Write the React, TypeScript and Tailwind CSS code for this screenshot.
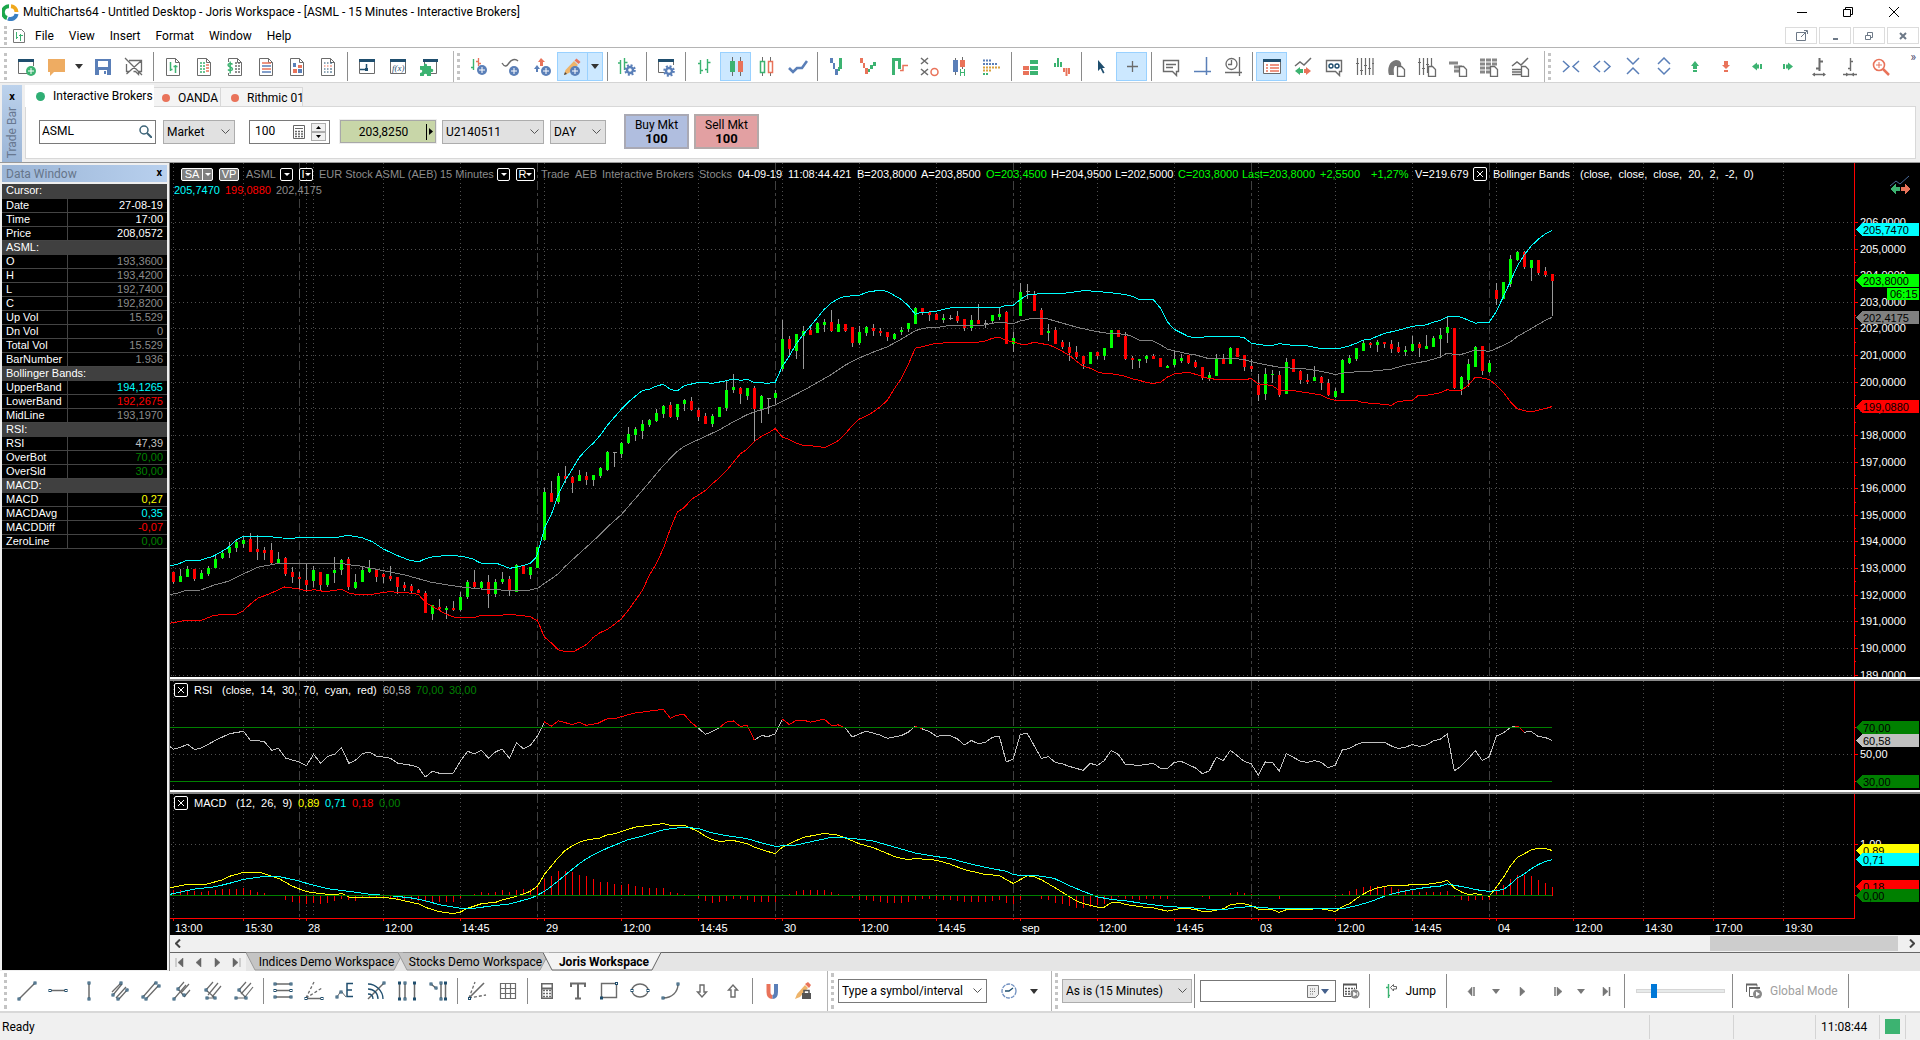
import type { ReactNode } from "react";
import { clsx } from "clsx";

type Frame = { x: number; y: number; sx: number; sy: number };

// Series are stored in blocks; every block has its own origin and resolution.
const EARLY: Frame = { x: 160, y: 440, sx: 2.45, sy: 3 };
const STUDY: Frame = { x: 160, y: 670, sx: 1.96, sy: 3 };
const MID: Frame = { x: 535, y: 220, sx: 3, sy: 2.24 };
const LATE: Frame = { x: 1045, y: 220, sx: 3, sy: 2.24 };

const FIRST_BAR = 173;
const BAR_STEP = 7;
const LEFT = 170;

function place(block: string, f: Frame) {
  return block
    .trim()
    .split(/\s+/)
    .map((p) => {
      const [x, y] = p.split(",").map(Number);
      return `${(f.x + x / f.sx).toFixed(1)},${(f.y + y / f.sy).toFixed(1)}`;
    })
    .join(" ");
}

const UPPER = [
  place("24,377 40,374 64,362 100,360 130,349 165,325 187,300 204,289 225,289 245,291 260,289 300,294 325,295 345,292 435,292 460,286 495,293 520,305 547,327 580,346 610,360 633,366 650,356 670,350 705,346 740,349 765,356 785,369 825,370 857,385 880,380 907,370 919,355", EARLY),
  place("7,750 28,692 49,660 70,615 91,583 112,558 133,532 154,514 175,500 196,482 217,460 259,424 280,408 301,395 322,382 343,379 364,372 385,368 406,379 427,383 448,371 490,364 511,364 532,366 574,360 595,356 616,359 637,357 655,363 700,366 721,363 742,328 763,305 784,277 805,256 826,238 868,200 889,186 910,176 931,171 973,169 994,162 1036,157 1057,160 1078,169 1099,178 1120,192 1141,211 1162,206 1183,206 1204,204 1246,197 1390,197 1414,191 1435,191 1456,178 1477,168 1498,166 1535,165", MID),
  place("10,165 52,165 73,162 94,161 115,158 157,160 199,163 220,165 241,167 262,171 283,178 325,178 346,197 367,228 388,245 409,253 430,261 451,264 493,261 577,261 598,264 619,276 661,281 682,281 703,277 745,281 787,282 820,287 882,288 913,282 934,276 955,269 976,267 1018,254 1060,247 1102,238 1144,235 1165,229 1186,225 1207,217 1228,215 1249,218 1291,231 1333,229 1354,205 1375,172 1396,138 1417,103 1438,78 1459,58 1480,43 1501,31 1521,23", LATE),
].join(" ");

const MIDDLE = [
  place("24,463 40,461 64,451 100,450 135,434 170,423 204,402 239,382 273,374 290,370 345,370 358,372 376,370 395,372 450,371 462,374 495,379 530,388 600,405 665,427 700,434 740,441 785,447 830,449 850,453 905,451 921,445", EARLY),
  place("7,826 28,814 49,804 70,792 91,776 133,747 175,719 217,688 259,660 322,606 385,550 427,518 448,507 469,499 511,485 553,470 595,452 637,436 658,430 700,420 721,414 763,398 805,382 847,364 889,346 931,325 973,309 1015,296 1057,284 1099,267 1141,248 1162,243 1183,241 1204,241 1246,236 1340,236 1390,229 1435,232 1456,226 1477,223 1491,220 1535,220", MID),
  place("10,222 52,231 94,240 136,247 178,253 241,256 262,261 283,269 325,271 346,279 367,289 388,293 430,300 451,302 493,311 577,311 598,313 640,321 703,330 787,334 829,339 871,346 913,341 976,339 1039,334 1081,325 1144,316 1186,307 1207,298 1228,301 1249,301 1291,291 1333,294 1354,288 1396,273 1417,261 1459,243 1501,225 1521,218", LATE),
].join(" ");

const LOWER = [
  place("24,550 64,541 102,541 130,527 155,523 187,523 204,512 221,493 239,475 273,459 305,441 340,447 358,452 378,449 405,455 445,448 462,459 480,463 520,463 560,455 605,458 633,463 650,487 680,508 700,522 720,531 770,533 787,526 835,526 857,523 880,526 907,530 923,541", EARLY),
  place("7,896 28,934 49,947 70,963 91,967 115,967 133,960 154,951 175,935 196,924 217,917 238,906 259,893 280,874 301,852 322,830 343,796 364,770 385,736 406,692 427,654 448,644 469,626 490,616 511,606 532,591 553,578 574,562 616,524 637,513 658,496 679,485 700,477 721,467 742,486 763,492 784,500 805,505 847,507 868,510 889,503 910,494 931,479 952,460 973,446 994,439 1015,430 1036,418 1057,404 1078,378 1099,355 1120,324 1141,287 1162,284 1204,276 1246,275 1325,274 1351,271 1372,265 1393,262 1414,270 1435,273 1456,278 1477,278 1498,274 1535,279", MID),
  place("10,279 31,286 52,294 73,303 94,316 115,328 136,332 157,340 178,344 199,344 241,350 262,356 283,359 304,364 325,366 346,364 367,352 388,345 430,341 472,350 493,356 598,358 619,355 640,367 682,371 703,382 745,382 787,387 829,392 850,400 871,404 934,404 955,409 1018,413 1039,415 1060,406 1102,404 1118,394 1144,393 1186,387 1207,380 1228,383 1249,382 1270,370 1291,352 1312,354 1333,357 1354,370 1375,386 1396,407 1417,423 1438,427 1459,430 1480,426 1501,422 1521,418", LATE),
].join(" ");

const RSI_GREY = [
  place("20,230 26,238 40,232 54,223 68,239 82,233 109,211 136,191 164,184 177,211 191,211 205,216 219,241 232,235 246,264 273,276 287,287 301,253 315,280 328,260 342,253 356,233 370,280 383,271 397,250 411,247 424,258 452,265 466,280 493,286 507,293 520,321 534,304 548,310 575,309 589,273 603,244 616,252 630,241 644,265 658,245 671,238 685,265 699,218 712,236 726,226 740,197 754,155", STUDY),
  place("490,1138 511,1152 532,1146 553,1137", MID),
  place("658,1165 679,1155 700,1157 721,1151 742,1118", MID),
  place("931,1138 952,1158 973,1151 994,1145 1036,1154 1057,1161 1099,1155 1120,1147 1141,1134", MID),
  place("1162,1140 1183,1146 1204,1156 1246,1155 1267,1162 1288,1176 1309,1166 1330,1173 1351,1170 1372,1159 1393,1156 1414,1214 1435,1207 1456,1152 1477,1150 1519,1206 1535,1203", MID) +
    " " +
    place("10,1202 31,1215 52,1218 73,1224 115,1233 136,1217 157,1222 178,1211 199,1188 220,1197 241,1219 283,1222 325,1217 346,1228 367,1229 388,1215 409,1213 451,1227 472,1240 493,1234 514,1203 535,1211 556,1188 577,1200 598,1213 619,1218 640,1244 661,1214 682,1215 703,1234 724,1195 766,1212 787,1215 808,1211 829,1215 850,1227 871,1221 892,1187 913,1184 934,1175 955,1170 1018,1170 1039,1178 1060,1184 1081,1181 1102,1175 1123,1179 1144,1176 1165,1167 1186,1163 1207,1151 1228,1234 1249,1223 1270,1207 1291,1188 1312,1211 1333,1202 1354,1156 1375,1149 1396,1137 1409,1134", LATE),
  place("1438,1147 1459,1146 1480,1157 1501,1159 1521,1166", LATE),
];

const RSI_RED = [
  place("28,1124 49,1134 70,1122 112,1130 133,1125 154,1132 190,1127 217,1117 238,1117 295,1105 385,1096 406,1116 427,1109 448,1108 469,1126 490,1138", MID),
  place("553,1137 574,1125 595,1122 616,1134 637,1132 658,1165", MID),
  place("742,1118 763,1130 784,1121 805,1120 826,1125 868,1118 889,1132 910,1131 931,1138", MID),
  place("1141,1134 1162,1140", MID),
  place("1409,1134 1420,1135 1438,1147", LATE),
];

const MACD_LINE = [
  place("20,653 54,643 82,645 95,641 123,629 136,619 164,607 195,607 219,619 232,625 260,649 287,665 310,670 342,675 356,670 370,681 411,681 440,682 466,688 507,702 520,712 548,725 575,731 589,726 603,715 630,701 658,697 671,690 699,679 726,664 738,650", STUDY),
  place("7,1493 28,1466 49,1447 70,1428 91,1412 112,1402 133,1394 154,1389 196,1384 217,1377 238,1375 301,1360 322,1358 385,1352 406,1356 448,1356 490,1370 511,1380 532,1388 553,1392 595,1390 637,1397 658,1405 679,1410 700,1415 721,1419 742,1405 763,1397 805,1383 847,1377 868,1374 910,1378 931,1384 973,1397 1015,1406 1057,1419 1078,1426 1118,1433 1141,1430 1204,1434 1246,1443 1288,1455 1351,1466 1393,1468 1414,1478 1435,1486 1477,1469 1498,1471 1519,1478", MID),
  place("10,1487 31,1496 52,1506 94,1525 115,1531 157,1539 178,1539 199,1529 220,1528 241,1533 304,1540 325,1541 367,1548 409,1542 451,1544 472,1549 493,1549 535,1543 556,1534 577,1532 598,1532 619,1536 640,1544 682,1545 703,1551 724,1545 829,1543 871,1549 892,1538 913,1532 934,1520 955,1510 976,1502 997,1496 1039,1490 1081,1491 1102,1488 1144,1488 1186,1484 1207,1479 1228,1496 1249,1505 1270,1511 1291,1509 1312,1512 1333,1515 1354,1494 1375,1473 1396,1447 1417,1428 1459,1411 1480,1407 1501,1408 1521,1412", LATE),
].join(" ");

const MACD_AVG = [
  place("20,673 68,657 109,650 136,640 164,628 205,619 232,619 246,624 273,633 287,640 328,656 370,664 411,673 452,677 493,684 520,692 548,704 589,715 616,715 644,709 685,702 726,685 738,677", STUDY),
  place("28,1504 49,1493 70,1480 91,1467 133,1442 154,1431 175,1422 217,1407 280,1388 322,1380 385,1366 448,1360 490,1363 532,1373 574,1379 637,1386 679,1395 721,1403 784,1400 826,1393 889,1383 931,1384 973,1387 1015,1391 1057,1400 1099,1409 1141,1418 1204,1426 1246,1430 1288,1439 1351,1450 1414,1459 1435,1466 1456,1468 1500,1468 1535,1472", MID),
  place("10,1472 31,1476 73,1491 115,1504 157,1516 199,1522 241,1525 304,1532 367,1538 430,1540 493,1544 545,1544 577,1540 619,1538 661,1541 724,1543 892,1543 934,1536 976,1527 1018,1515 1060,1506 1102,1500 1144,1495 1186,1492 1207,1487 1228,1490 1270,1496 1291,1500 1333,1504 1375,1500 1396,1488 1417,1474 1438,1465 1459,1453 1480,1444 1501,1437 1521,1433", LATE),
].join(" ");

const MACD_DIFF = [
  6, 6, 6, 5, 4, 5, 6, 7, 7, 7, 8, 6, 4, 3, 0, 0, -4, -6, -7, -8, -7, -8, -7, -5, -3, -4, -5, -2, -1, -1, -1, -2, -3, -4, -4, -5, -6, -7, -6,
  -6, -6, -2, 0, 2, 4, 3, 4, 6, 4, 6, 7, 7, 11, 17, 20, 25, 25, 24, 21, 20, 17, 14, 14, 12, 11, 12, 10, 9, 8, 8, 8, 4, 3, 2, 0, -2, -5, -7,
  -6, -5, -3, -3, -4, -6, -6, -6, -6, 0, 2, 5, 6, 6, 6, 6, 4, 2, 0, -2, -4, -4, -5, -6, -7, -7, -7, -6, -4, -3, -3, -4, -4, -4, -5, -6, -6,
  -6, -6, -5, -4, -7, -8, -4, 0, 0, -3, -4, -7, -8, -10, -12, -12, -11, -9, -8, -4, -1, -3, -3, -4, -3, -3, -3, -3, 0, 0, 0, 0, -1, -3, 0,
  1, 3, 4, 3, 2, 0, 0, 0, -3, 0, 1, 0, 0, 0, 0, 0, -1, 2, 5, 7, 9, 10, 10, 10, 9, 7, 6, 5, 4, 4, 4, 4, 5, -1, -4, -5, -4, -4, -4, 7, 11, 17,
  21, 21, 20, 16, 13, 9,
];

// direction, body top, body bottom, high, low ("_" when there is no wick)
const BARS_EARLY =
  "r 396 425 _ 431;g 408 425 387 _;g 387 410 378 _;r 387 416 _ 422;g 399 416 390 _;g 384 402 378 408;g 357 384 348 _;g 339 354 330 357;g 321 339 306 354;g 306 324 297 336;g 300 311 288 324;r 297 335 279 _;r 327 335 285 360;r 330 339 321 360;r 330 369 309 375;g 357 370 336 _;r 354 402 350 408;r 396 411 381 429;r 411 417 396 447;r 420 435 369 455;g 390 423 378 441;r 396 435 _ 450;g 402 435 _ 441;g 390 399 350 429;g 360 390 357 405;r 357 441 350 450;g 426 444 402 447;g 390 426 381 _;g 384 396 360 399;r 387 411 _ 426;r 402 411 399 429;r 408 417 378 423;r 411 441 _ 462;r 435 444 426 453;r 438 453 432 459;r 450 459 447 _;r 459 518 453 _;g 495 521 _ 540;r 501 507 477 512;g 504 510 497 537;r 504 510 483 513;g 471 510 456 513;g 426 471 421 477;r 426 441 390 447;g 426 444 423 447;r 426 461 405 504;g 426 461 417 470;g 417 426 396 432;r 417 453 408 467;g 375 455 372 _;r 375 402 _ _;g 381 405 _ 417;g 321 384 _ _;g 156 299 144 303;r 159 186 123 _;g 108 186 100 192;r 108 117 78 129;r 111 129 108 159;g 105 122 90 _;r 108 120 96 135;g 105 120 _ 138;g 84 108 81 114;g 36 90 33 93;d 36 36 _ 81";
const BARS_MID =
  "g 500 524 497 533;g 479 500 464 502;g 468 482 463 495;g 457 473 448 491;g 448 459 445 463;g 432 450 424 452;g 417 435 414 444;r 414 441 408 443;g 412 441 _ 447;g 403 413 400 427;r 405 426 397 428;r 426 441 420 450;r 439 458 432 _;g 439 457 435 464;g 419 441 _ _;g 381 421 360 428;g 374 381 345 388;r 376 390 374 412;g 376 394 _ 403;r 376 423 372 496;g 394 425 391 455;d 398 398 _ 435;g 388 399 380 412;g 267 333 224 338;r 267 289 260 305;g 255 293 _ 311;g 249 259 238 334;r 246 258 240 _;g 231 253 228 _;g 228 235 222 251;r 228 249 202 251;g 233 251 222 _;r 233 249 _ 251;r 240 276 _ 284;g 251 276 238 280;g 240 253 237 260;r 242 249 234 260;r 249 253 243 260;r 251 262 _ 271;g 255 267 252 269;g 246 251 240 258;g 231 244 _ 251;g 197 234 195 _;r 197 207 _ 213;r 206 213 _ 226;r 211 224 208 _;g 220 224 210 231;d 220 220 212 224;r 215 226 204 231;r 222 242 _ 249;g 224 242 213 248;r 224 233 188 _;d 230 230 224 243;g 213 226 _ 231;g 211 217 196 224;r 206 278 204 _;g 264 277 251 296;g 161 215 141 _;d 160 160 143 177;r 168 204 159 _;r 202 258 197 _";
const BARS_LATE =
  "g 249 252 233 271;r 246 278 240 _;r 273 284 269 289;r 284 298 273 316;r 296 307 282 312;r 305 323 _ 334;g 296 323 _ _;r 296 305 _ 311;g 287 305 _ 314;g 246 287 _ _;r 246 262 _ _;r 260 311 251 314;r 309 314 305 334;g 311 316 _ 332;g 305 311 302 320;r 305 311 300 _;r 309 329 _ _;g 327 332 324 _;g 311 325 293 329;g 309 316 300 320;r 302 320 _ 323;r 318 329 314 332;r 329 354 _ 358;g 347 356 340 361;g 311 349 300 _;r 309 323 300 _;g 287 323 284 _;r 287 307 _ _;r 302 329 _ 338;r 327 334 311 340;r 370 392 345 405;g 345 390 332 403;g 345 348 336 365;r 347 392 338 396;g 318 390 309 _;r 311 340 _ _;r 338 358 336 367;r 358 363 345 367;g 352 361 327 _;r 352 365 349 381;r 365 392 356 394;g 383 396 376 399;g 314 388 311 _;g 309 320 302 323;g 287 311 _ 316;g 276 293 271 _;r 275 280 273 287;g 273 280 269 296;r 273 278 _ 287;r 278 289 269 298;r 284 296 273 298;g 291 296 282 305;g 278 293 260 296;r 278 287 273 307;g 282 289 258 _;g 264 284 260 _;g 258 267 242 305;g 240 253 218 276;r 242 376 _ 379;g 352 379 349 392;g 323 358 311 374;g 284 329 282 _;r 282 338 _ 347;g 320 340 314 343;r 157 177 141 190;g 139 177 _ _;g 87 143 78 150;g 72 90 69 92;r 72 105 69 110;g 90 108 _ 137;r 90 119 _ 123;r 114 123 105 128;r 121 137 _ 215";

function readBars(block: string, f: Frame) {
  return block.split(";").map((b) => {
    const [dir, t, o, h, l] = b.split(" ");
    const y = (v: string) => Math.round(f.y + Number(v) / f.sy);
    const top = y(t);
    const bottom = y(o);
    return { dir, top, bottom, high: h === "_" ? top : y(h), low: l === "_" ? bottom : y(l) };
  });
}

const BARS = [...readBars(BARS_EARLY, EARLY), ...readBars(BARS_MID, MID), ...readBars(BARS_LATE, LATE)];

const TICKS: [number, string][] = [
  [173, "13:00"], [243, "15:30"], [306, "28"], [383, "12:00"], [460, "14:45"], [544, "29"], [621, "12:00"], [698, "14:45"],
  [782, "30"], [859, "12:00"], [936, "14:45"], [1020, "sep"], [1097, "12:00"], [1174, "14:45"], [1258, "03"], [1335, "12:00"],
  [1412, "14:45"], [1496, "04"], [1573, "12:00"], [1643, "14:30"], [1713, "17:00"], [1783, "19:30"],
];
const SESSIONS = [299, 537, 775, 1013, 1251, 1489];

const priceY = (p: number) => Math.round(222 + (206 - p) * 26.62);

/* ---------- icons ---------- */

const NAVY = "#1f4e6e";
const GREEN = "#3cb371";
const RED = "#e9735a";
const BLUE = "#5a7fb8";
const GREY = "#6b6b6b";

function Icon({ children, w = 20 }: { children: ReactNode; w?: number }) {
  return (
    <svg width={w} height="20" viewBox={`0 0 ${w} 20`} fill="none" stroke={GREY} strokeWidth="1" aria-hidden="true" className="shrink-0">
      {children}
    </svg>
  );
}

const Plus = ({ x = 14, y = 14, c = BLUE }: { x?: number; y?: number; c?: string }) => (
  <g stroke="none">
    <circle cx={x} cy={y} r="5" fill={c} />
    <path d={`M${x - 3} ${y - 0.5}h6v1h-6zM${x - 0.5} ${y - 3}h1v6h-1z`} fill="#fff" />
  </g>
);

const Gear = ({ x = 14, y = 13 }: { x?: number; y?: number }) => (
  <g stroke={BLUE}>
    <circle cx={x} cy={y} r="3" strokeWidth="2.4" />
    <circle cx={x} cy={y} r="4.8" strokeWidth="2" strokeDasharray="2 1.77" />
  </g>
);

const Page = ({ children }: { children?: ReactNode }) => (
  <Icon>
    <path d="M3.500 1.500h9l4 4v13h-13zM12.500 1.500v4h4" />
    {children}
  </Icon>
);

const WinFrame = ({ children }: { children?: ReactNode }) => (
  <Icon>
    <path d="M2.500 4v12.500h15V4" />
    <path d="M2 3.500h16" stroke={NAVY} strokeWidth="3" />
    {children}
  </Icon>
);

const Sheet = () => <path d="M11.500 9.500h4l3 3v7h-7z" fill="#fff" strokeWidth="1.300" />;

const ohlc = "M5.500 3v14M3 6.500h2.500M5.500 13.500h2.500M12.500 2v14M10 12.500h2.500M12.500 5.500h3";

const topGroups: { name: string; icon: ReactNode; on?: boolean; caret?: boolean }[][][] = [
  [
    [
      { name: "New workspace", icon: <Icon><path d="M2.500 4v12.500h9M17.500 4v5" /><path d="M2 3.500h16" stroke={NAVY} strokeWidth="3" /><Plus x={15} y={14} c={GREEN} /></Icon> },
      { name: "Open", caret: true, icon: <Icon><path d="M1 2h17v13H7l-4 4v-4H1z" fill="#eeac62" stroke="none" /></Icon> },
      { name: "Save", icon: <Icon><path d="M2 2h16v16H2z" fill={BLUE} stroke="none" /><path d="M5 4h10v6H5zM6 13h8v5H6z" fill="#fff" stroke="none" /><path d="M11 14h2v3h-2z" fill={BLUE} stroke="none" /></Icon> },
      { name: "Close workspace", icon: <Icon><path d="M5 3.500h12.500v11h-3v3l-3-3h-2M2.500 7v7.500h3M2.500 17 17 4M1 1l17 17" strokeWidth="1.300" /></Icon> },
    ],
    [
      { name: "Insert chart", icon: <Page><path d="M7.500 5v9M7.500 12.500h2M12.500 8v8M10.500 9.500h4" stroke={GREEN} strokeWidth="1.500" /></Page> },
      { name: "Insert scanner", icon: <Page><path d="M6 6h2m1 0h2M6 9h2m1 0h2M6 12h2m1 0h2M6 15h2m1 0h2" stroke={GREEN} strokeWidth="1.600" /><path d="M12 8h3M12 11h3M12 14h3" stroke={RED} strokeWidth="1.600" /></Page> },
      { name: "Depth of market", icon: <Page><path d="M10 6h2m1 0h2M10 9h2m1 0h2M10 12h2m1 0h2M10 15h2m1 0h2" strokeWidth="1.500" /><path d="M2 5h6v11H2z" fill="#fff" stroke="none" /><path d="M7.500 7.500c-1-1.500-4.500-1.500-4.500.5s4.500 2 4.500 4-3.500 2-4.500.5M5.200 4.500v12" stroke={GREEN} strokeWidth="1.400" /></Page> },
      { name: "Order and position tracker", icon: <Page><path d="M6 6h9M6 12h9" stroke={RED} strokeWidth="1.600" /><path d="M6 9h9M6 15h9" stroke={BLUE} strokeWidth="1.600" /></Page> },
      { name: "Portfolio", icon: <Page><path d="M6 6h3v4H6zM11 12h4v4h-4z" fill={BLUE} stroke="none" /><path d="M11 8h4v3h-4zM6 12h4v4H6z" fill={RED} stroke="none" /></Page> },
      { name: "Time and sales", icon: <Page><path d="M6 6h1.500m1.500 0h1.500m1.500 0h2M6 12h1.500m1.500 0h1.500m1.500 0h2M6 15h1.500m1.500 0h1.500m1.500 0h2" stroke={NAVY} /><path d="M6 9h1.500m1.500 0h1.500m1.500 0h2" stroke={RED} /></Page> },
    ],
    [
      { name: "QuoteManager", icon: <WinFrame><path d="M3 12.500h6M9.500 7v6" stroke={NAVY} strokeWidth="1.500" /><path d="M8 11h3v3H8z" fill={NAVY} stroke="none" /></WinFrame> },
      { name: "PowerLanguage editor", icon: <WinFrame><text x="4" y="14" fontSize="9" fontStyle="italic" fill={NAVY} stroke="none" className="font-['Liberation_Serif',serif]">f(x)</text></WinFrame> },
      { name: "Add-ons", icon: <Icon><path d="M5.500 4v4M10 16.500h7.500V4" /><path d="M4 3.500h15" stroke={NAVY} strokeWidth="3" /><path d="M1 9h4c-1-3 4-3 3 0h4v3c3-1 3 4 0 3v4H8c1-3-4-3-3 0H1v-3c3 0 3-4 0-3z" fill={GREEN} stroke="none" /></Icon> },
    ],
  ],
  [
    [
      { name: "Insert instrument", icon: <Icon><path d="M3.500 2v11M1 10.500h2.500" stroke={GREEN} strokeWidth="1.400" /><path d="M8.500 1v8M6 4.500h2.500M8.500 6.500H11" stroke={RED} strokeWidth="1.300" /><Plus x={12} y={13} /></Icon> },
      { name: "Insert study", icon: <Icon><path d="M1 6c3 5 5 3 7 0s6-5 9-2" strokeWidth="1.400" /><Plus x={13} y={14} /></Icon> },
      { name: "Insert signal", icon: <Icon><path d="M5 8l3 4H6v3H4v-3H2z" fill={BLUE} stroke="none" /><path d="M9 1l4 4h-2v4H8V5H6z" fill={RED} stroke="none" /><Plus x={14} y={14} /></Icon> },
      { name: "Insert drawing", caret: true, on: true, icon: <Icon><path d="M1 18l1.500-5L11 4l4 4-9 8z" fill="#eeb46a" stroke="none" /><path d="M11.500 3.500l2-2 4 3.500-2 2z" fill={RED} stroke="none" /><path d="M1 18l1-3 2 2z" fill="#444" stroke="none" /><Plus x={12} y={14} /></Icon> },
    ],
    [{ name: "Format instruments", icon: <Icon><path d="M3.500 3v14M1 6h2.500M7.500 1v12M7.500 5.500h3" stroke={GREEN} strokeWidth="1.400" /><Gear x={13} y={13} /></Icon> }],
    [{ name: "Format window", icon: <Icon><path d="M2.500 4v11.500h6M17.500 4v4" /><path d="M2 3.500h16" stroke={NAVY} strokeWidth="3" /><Gear x={13} y={14} /></Icon> }],
    [
      { name: "OHLC bar", icon: <Icon><path d={ohlc} stroke={GREEN} strokeWidth="1.400" /></Icon> },
      { name: "Candlestick", on: true, icon: <Icon><path d="M6.500 0v19M14.500 0v19" /><path d="M4 4h5v11H4z" fill={GREEN} stroke="none" /><path d="M12 4h5v11h-5z" fill={RED} stroke="none" /></Icon> },
      { name: "Hollow candlestick", icon: <Icon><path d="M5.500 0v19M13.500 0v19" /><path d="M3.500 4.500h4v11h-4z" fill="#fff" stroke={GREEN} strokeWidth="1.500" /><path d="M11.500 4.500h4v11h-4z" fill="#fff" stroke={RED} strokeWidth="1.500" /></Icon> },
      { name: "Line", icon: <Icon><path d="M1 11l4 4 4-4h5l5-7" stroke={BLUE} strokeWidth="2.600" /></Icon> },
    ],
    [
      { name: "Kagi", icon: <Icon><path d="M3 1h3v5H3zM6 6h2v6H6zM8 12h3v6H8z" fill={BLUE} stroke="none" /><path d="M11 10h2v4h-2zM12 1h3v11h-3z" fill={GREEN} stroke="none" /></Icon> },
      { name: "Line break", icon: <Icon><path d="M2 1h3v5H2zM5 6h2v5H5zM7 11h3v6H7z" fill={RED} stroke="none" /><path d="M10 12h2v3h-2zM12 8h3v4h-3zM15 5h3v4h-3z" fill={GREEN} stroke="none" /></Icon> },
      { name: "Renko", icon: <Icon><path d="M4.500 18V2.500h6V12" stroke={GREEN} strokeWidth="3" /><path d="M11 13.500h3V8.500h5" stroke={RED} strokeWidth="1.500" /></Icon> },
      { name: "Point and figure", icon: <Icon><path d="M1 1l7 6M8 1L1 7M1 12l7 6M8 12l-7 6" strokeWidth="1.500" /><circle cx="14.500" cy="15" r="3.500" stroke={RED} strokeWidth="1.500" /></Icon> },
      { name: "Heikin-Ashi", icon: <Icon><path d="M4.500 1v17M11.500 0v12" /><path d="M2 3h5v12H2z" fill={BLUE} stroke="none" /><path d="M9 3h5v7H9z" fill={RED} stroke="none" /><path d="M9.500 12v7M13.500 12v7M9.500 15.500h4" stroke={GREEN} /></Icon> },
      { name: "Volume delta", icon: <Icon><path d="M1 3.500h9" stroke={BLUE} strokeWidth="2" strokeDasharray="2 1" /><path d="M1 7h14" stroke={BLUE} strokeWidth="2" strokeDasharray="2 1" /><path d="M1 10.500h17M1 13.500h8" stroke="#d9a13e" strokeWidth="2" strokeDasharray="2 1" /><path d="M1 17h5" stroke={GREEN} strokeWidth="2" strokeDasharray="2 1" /></Icon> },
    ],
    [
      { name: "Volume profile", icon: <Icon><path d="M9 3h8v4H9zM9 9h8v4H9zM9 14h8v4H9z" fill={GREEN} stroke="none" /><path d="M2 9h6v4H2zM2 14h6v4H2z" fill={RED} stroke="none" /></Icon> },
      { name: "Volume on bid and ask", icon: <Icon><path d="M3 6v4M6 1v9M9 5v5" stroke={GREEN} strokeWidth="2" /><path d="M12 11v4M14.500 11v8M17 11v6" stroke={RED} strokeWidth="2" /></Icon> },
    ],
    [
      { name: "Pointer", icon: <Icon><path d="M7 3v11l2.500-2.500 2.500 5 1.500-.8-2.300-4.700H14z" fill={NAVY} stroke="none" /></Icon> },
      { name: "Crosshair", on: true, icon: <Icon><path d="M10.500 4v11M5 9.500h11" strokeWidth="1.300" /></Icon> },
    ],
    [
      { name: "Data tip", icon: <Icon><path d="M2.500 3.500h15v11h-2v4l-4-4h-9zM5 7.500h10M5 10.500h7" strokeWidth="1.400" /></Icon> },
      { name: "Price line", icon: <Icon><path d="M14.500 0v18M2 14.500h17" stroke={BLUE} strokeWidth="1.500" /></Icon> },
      { name: "Time line", icon: <Icon><circle cx="8.500" cy="7" r="5.500" strokeWidth="1.300" /><path d="M8.500 3v4.500H5M16.500 0v19M2 15.500h17" strokeWidth="1.300" /></Icon> },
    ],
    [
      { name: "Data window", on: true, icon: <Icon><path d="M1.500 4v12.500h17V4" fill="#fff" /><path d="M1 3.500h18" stroke={NAVY} strokeWidth="3" /><path d="M4 8h2M4 11h2M4 14h2M8 8h9M8 11h9M8 14h9" stroke={RED} strokeWidth="1.500" /></Icon> },
      { name: "Trade panel", icon: <Icon><path d="M2 9l5-4 4 3 7-7" strokeWidth="1.500" /><path d="M2 14l5-4v2h3v4H7v2z" fill={GREEN} stroke="none" /><path d="M18 14l-5-4v2h-2v4h2v2z" fill={RED} stroke="none" /></Icon> },
      { name: "Watch", icon: <Icon><path d="M2.500 3.500h15v11h-2v4l-4-4h-9z" strokeWidth="1.400" /><circle cx="7" cy="9" r="2" stroke={NAVY} strokeWidth="1.400" /><circle cx="13" cy="9" r="2" stroke={NAVY} strokeWidth="1.400" /></Icon> },
      { name: "Bar spacing", icon: <Icon><path d="M2.500 1v17M6.500 1v17M10.500 1v17M14.500 1v17M18 1v17M1 6.500h3M5 13.500h3M9 8.500h3M13 11.500h3M17 6.500h2" strokeWidth="1.200" /></Icon> },
      { name: "Strategy template", icon: <Icon><path d="M3 18c-2-6 0-14 7-15 4 0 6 3 5 6H9c-2 3-1 5-1 9z" fill="#777" stroke="none" /><Sheet /></Icon> },
      { name: "Study template", icon: <Icon><path d="M2.500 1v17M6.500 1v17M10.500 1v15M14.500 1v8M1 5.500h3M5 11.500h3M9 7.500h3" strokeWidth="1.200" /><Sheet /></Icon> },
      { name: "Chart template", icon: <Icon><path d="M1 6h9M6 10h8M6 14h5" strokeWidth="3" stroke="#888" /><Sheet /></Icon> },
      { name: "Scanner template", icon: <Icon><path d="M1 3h17M1 7h17M1 11h11M1 15h11" strokeWidth="3" strokeDasharray="5 1" stroke="#888" /><Sheet /></Icon> },
      { name: "Order template", icon: <Icon><path d="M2 9l5-4 4 3 7-7M2 12.500h9M2 15h9M2 17.500h9" strokeWidth="1.500" /><Sheet /></Icon> },
    ],
  ],
  [
    [
      { name: "Compress bars", icon: <Icon><path d="M2 4l6 5.500L2 15M18 4l-6 5.500 6 5.500" stroke={BLUE} strokeWidth="1.500" /></Icon> },
      { name: "Expand bars", icon: <Icon><path d="M8 4L2 9.500 8 15M12 4l6 5.500-6 5.500" stroke={BLUE} strokeWidth="1.500" /></Icon> },
      { name: "Compress scale", icon: <Icon><path d="M4 1l6 6 6-6M4 17l6-6 6 6" stroke={BLUE} strokeWidth="1.500" /></Icon> },
      { name: "Expand scale", icon: <Icon><path d="M4 7l6-6 6 6M4 11l6 6 6-6" stroke={BLUE} strokeWidth="1.500" /></Icon> },
      { name: "Shift up", icon: <Icon><path d="M10 4l4 5h-2v3H8V9H6zM8 13h4v2H8z" fill={GREEN} stroke="none" /></Icon> },
      { name: "Shift down", icon: <Icon><path d="M10 12l4-4h-2V4H8v4H6zM8 13h4v2H8z" fill={RED} stroke="none" /></Icon> },
      { name: "Shift left", icon: <Icon><path d="M5 9.500l5-4v2h2v4h-2v2zM13 7h2v5h-2z" fill={GREEN} stroke="none" /></Icon> },
      { name: "Shift right", icon: <Icon><path d="M15 9.500l-5-4v2H8v4h2v2zM5 7h2v5H5z" fill={GREEN} stroke="none" /></Icon> },
      { name: "Increase space", icon: <Icon><path d="M10.500 1v13M7 11.500h3M11 4.500h3" strokeWidth="2" /><path d="M4 17.500h12" strokeWidth="1.500" /><path d="M3 17.500l3-2v4zM17 17.500l-3-2v4z" fill={GREY} stroke="none" /></Icon> },
      { name: "Decrease space", icon: <Icon><path d="M10.500 1v13M8 11.500h2M11 4.500h2" strokeWidth="1.400" /><path d="M3 17.500h14" strokeWidth="1.500" /><path d="M9 17.500l-3-2v4zM11 17.500l3-2v4z" fill={GREY} stroke="none" /></Icon> },
      { name: "Zoom in", icon: <Icon><circle cx="8" cy="8" r="5.500" stroke={RED} strokeWidth="1.600" /><path d="M5 8h6M8 5v6" stroke={RED} /><path d="M12 12l6 6" stroke={RED} strokeWidth="2.500" /></Icon> },
    ],
  ],
];

// small square grips on the ends of a drawing tool
const Grip = ({ at }: { at: [number, number][] }) => (
  <g fill="#fff" stroke={NAVY}>
    {at.map(([x, y]) => (
      <rect key={`${x}-${y}`} x={x - 1} y={y - 1} width="2" height="2" />
    ))}
  </g>
);

const drawGroups: { name: string; icon: ReactNode }[][] = [
  [
    { name: "Trend line", icon: <Icon><path d="M2 18L18 2" strokeWidth="1.500" /><Grip at={[[2, 18], [18, 2]]} /></Icon> },
    { name: "Horizontal line", icon: <Icon><path d="M2 9.500h16" strokeWidth="1.500" /><Grip at={[[2, 9.5], [18, 9.5]]} /></Icon> },
    { name: "Vertical line", icon: <Icon><path d="M10 2v16" strokeWidth="1.500" /><Grip at={[[10, 2], [10, 18]]} /></Icon> },
    { name: "Regression channel", icon: <Icon><path d="M3 14L12 3M6 17L16 6M9 18l9-10M2 11l9-9" strokeWidth="1.300" /><Grip at={[[11, 2], [3, 14], [17, 9], [8, 18]]} /></Icon> },
    { name: "Parallel channel", icon: <Icon><path d="M2 16L15 1M5 18L18 4" strokeWidth="1.300" /><Grip at={[[2, 16], [15, 2], [18, 5], [5, 18]]} /></Icon> },
    { name: "Andrews pitchfork", icon: <Icon><path d="M2 18L14 4M6 8l6-7M12 16l6-7M6 8l6 7M9 12l8-9" strokeWidth="1.200" /><Grip at={[[2, 18], [6, 8], [12, 14]]} /></Icon> },
    { name: "Schiff pitchfork", icon: <Icon><path d="M3 9l7-8M5 14L15 2M9 16l9-11M3 9l9 8H4" strokeWidth="1.200" /><Grip at={[[3, 9], [4, 17], [12, 17]]} /></Icon> },
    { name: "Modified pitchfork", icon: <Icon><path d="M5 9l7-8M7 13L17 2M11 16l8-10M5 9l7 8H2" strokeWidth="1.200" /><Grip at={[[5, 9], [2, 17], [12, 17]]} /></Icon> },
  ],
  [
    { name: "Fibonacci retracement", icon: <Icon><path d="M2 3h16M2 9.500h16M2 16h16" strokeWidth="1.500" /><Grip at={[[2, 3], [18, 3], [2, 9.5], [18, 9.5], [2, 16], [18, 16]]} /></Icon> },
    { name: "Fibonacci speed fan", icon: <Icon><path d="M2 17.500h16" strokeWidth="1.500" /><path d="M2 17L10 1M2 17L18 7" strokeDasharray="3 2" strokeWidth="1.300" /><Grip at={[[2, 17.5], [18, 17.5]]} /></Icon> },
    { name: "Elliott wave", icon: <Icon><path d="M2 16l4-6 5 6" /><path d="M18 2.500h-6v13h6M12 9h5" stroke={NAVY} strokeWidth="1.500" /><Grip at={[[2, 16], [6, 11]]} /></Icon> },
    { name: "Fibonacci arcs", icon: <Icon><path d="M2 18L18 2" strokeWidth="1.400" /><path d="M2 3c8 0 15 7 15 15M2 8c6 0 10 4 10 10M2 13c3 0 5 2 5 5" stroke={NAVY} strokeWidth="1.300" /><Grip at={[[18, 2]]} /></Icon> },
    { name: "Fibonacci time zones", icon: <Icon><path d="M2.500 2v16M8 2v16M17.500 2v16" strokeWidth="1.500" /><Grip at={[[2.5, 2], [8, 2], [17.5, 2], [2.5, 18], [8, 18], [17.5, 18]]} /></Icon> },
    { name: "Fibonacci projection", icon: <Icon><path d="M3 3l6 5M13 2v16M17.500 2v16" strokeWidth="1.500" /><Grip at={[[3, 3], [8, 7], [13, 2], [17.5, 2], [13, 18], [17.5, 18]]} /></Icon> },
  ],
  [
    { name: "Gann fan", icon: <Icon><path d="M2 17L17 2" strokeWidth="1.600" /><path d="M2 17L8 1M2 17l17-3" strokeDasharray="3 2" strokeWidth="1.300" /><Grip at={[[2.5, 17.5]]} /></Icon> },
    { name: "Gann square", icon: <Icon><path d="M2.500 2.500h15v15h-15zM7.500 2.500v15M12.500 2.500v15M2.500 7.500h15M2.500 12.500h15" strokeWidth="1.200" /></Icon> },
  ],
  [
    { name: "Calculator", icon: <Icon><path d="M4 2h12v16H4z" fill="#666" stroke="none" /><path d="M5.500 3.500h9v3h-9zM5.500 8.500h9v8h-9z" fill="#fff" stroke="none" /><path d="M6 9.500h2m1 0h2m1 0h2M6 12.500h2m1 0h2m1 0h2M6 15.500h2m1 0h2m1 0h2" strokeWidth="1.700" /></Icon> },
    { name: "Text", icon: <Icon><path d="M3 6V2.500h14V6M10 3v15M7 17.500h6" strokeWidth="2" /></Icon> },
    { name: "Rectangle", icon: <Icon><path d="M2.500 2.500h15v14h-15z" strokeWidth="1.400" /><Grip at={[[2.5, 17], [17.5, 2.5]]} /></Icon> },
    { name: "Ellipse", icon: <Icon><ellipse cx="10" cy="9.500" rx="8" ry="6.500" strokeWidth="1.400" /><Grip at={[[2, 9.5], [18, 9.5]]} /></Icon> },
    { name: "Arc", icon: <Icon><path d="M2 17c9 0 15-6 15-14" strokeWidth="1.400" /><Grip at={[[2, 17], [17, 3]]} /></Icon> },
    { name: "Arrow down", icon: <Icon><path d="M8 4h4v7h2.500L10 16l-4.500-5H8z" strokeWidth="1.400" /></Icon> },
    { name: "Arrow up", icon: <Icon><path d="M8 16h4V9h2.500L10 4 5.500 9H8z" strokeWidth="1.400" /></Icon> },
  ],
  [
    { name: "Magnet", icon: <Icon><path d="M6.500 3v8c0 3 1 5 4 5" stroke={RED} strokeWidth="4" /><path d="M14 3v8c0 3-1 5-3.500 5" stroke={BLUE} strokeWidth="4" /></Icon> },
    { name: "Lock drawings", icon: <Icon><path d="M2 18l2-5 8-9 3 3-8 9z" fill="#eeb46a" stroke="none" /><path d="M12 3l3-2 3 3-2 3z" fill={RED} stroke="none" /><path d="M9 12h9v6H9z" fill="#555" stroke="none" /><path d="M11 12V9.500h5V12" stroke="#555" strokeWidth="1.500" /></Icon> },
  ],
];

/* ---------- small parts ---------- */

const Rule = () => (
  <span className="flex w-2 shrink-0 justify-center self-stretch py-px">
    <span className="w-px bg-[#8a8a8a]" />
  </span>
);

const Handle = () => <span className="my-[2px] w-[3px] shrink-0 self-stretch border-l-[3px] border-dotted border-[#c4c4c4]" />;

const Caret = ({ color = "#333" }: { color?: string }) => (
  <svg width="8" height="5" viewBox="0 0 8 5" aria-hidden="true">
    <path d="M0 0h8L4 5z" fill={color} />
  </svg>
);

const Chevron = () => (
  <svg width="9" height="6" viewBox="0 0 9 6" fill="none" stroke="#555" aria-hidden="true" className="pointer-events-none absolute right-1 top-1/2 -translate-y-1/2">
    <path d="M.5.5l4 4 4-4" />
  </svg>
);

function ToolButton({ name, icon, on, caret }: { name: string; icon: ReactNode; on?: boolean; caret?: boolean }) {
  return (
    <>
      <button
        aria-label={name}
        className={clsx("flex h-[29px] w-[31px] shrink-0 items-center justify-center border", on ? "border-[#99d1ff] bg-[#cce8ff]" : "border-transparent")}
      >
        {icon}
      </button>
      {caret && (
        <button
          aria-label={`${name} options`}
          className={clsx("flex h-[29px] w-[15px] shrink-0 items-center justify-center border border-l-0", on ? "border-[#99d1ff] bg-[#cce8ff]" : "border-transparent")}
        >
          <Caret />
        </button>
      )}
    </>
  );
}

function Combo({ label, value, className }: { label: string; value: string; className: string }) {
  return (
    <div className={clsx("relative h-6 shrink-0 border", className)}>
      <select aria-label={label} className="h-full w-full appearance-none bg-transparent pl-[3px] pr-4 outline-none">
        <option>{value}</option>
      </select>
      <Chevron />
    </div>
  );
}

/* ---------- window chrome ---------- */

function TitleBar() {
  return (
    <div className="flex h-6 items-center pl-[2px] pr-5">
      <svg width="17" height="17" viewBox="0 0 17 17" fill="none" strokeWidth="4" aria-hidden="true">
        <path d="M7 2.300A6 6 0 0 0 5 14" stroke="#1aa64a" />
        <path d="M9 2.300A6 6 0 0 1 14.500 8" stroke="#f0a81c" />
        <path d="M14.500 10A6 6 0 0 1 6 14.500" stroke="#3a7fc2" />
      </svg>
      <h1 className="ml-1 text-[12px]">MultiCharts64 - Untitled Desktop - Joris Workspace - [ASML - 15 Minutes - Interactive Brokers]</h1>
      <div className="ml-auto flex gap-[35px]">
        <button aria-label="Minimize">
          <svg width="11" height="11" viewBox="0 0 11 11"><path d="M0 5.500h10" stroke="#000" /></svg>
        </button>
        <button aria-label="Restore">
          <svg width="11" height="11" viewBox="0 0 11 11" fill="none" stroke="#000"><path d="M.5 2.500h7v7h-7zM2.500 2V.5h7v7H8" /></svg>
        </button>
        <button aria-label="Close">
          <svg width="11" height="11" viewBox="0 0 11 11" stroke="#000"><path d="M0 0l10 10M10 0L0 10" /></svg>
        </button>
      </div>
    </div>
  );
}

function MenuBar() {
  return (
    <div className="flex h-6 items-center border-b border-[#b4b4b4] pl-1">
      <Handle />
      <svg width="12" height="14" viewBox="0 0 12 14" fill="none" stroke="#777" aria-hidden="true" className="ml-[6px] mr-[10px]">
        <path d="M.5.5h8l3 3v10H.5z" />
        <path d="M3.500 3v7M3 8.500h2M7.500 5v7M6 6.500h4" stroke={GREEN} />
      </svg>
      <nav className="flex gap-[15px]">
        {["File", "View", "Insert", "Format", "Window", "Help"].map((m) => (
          <button key={m}>{m}</button>
        ))}
      </nav>
      <div className="ml-auto flex gap-[2px] pr-px">
        {[
          ["Detach", "M1.500 2.500h9v8h-9zM6 7l6-6M9 .5h3.500V4", "1"],
          ["Minimize chart", "M4 9h5", "2"],
          ["Restore chart", "M2.500 5.500h5v4h-5zM4.500 5V2.500h5v5H8", "1"],
          ["Close chart", "M3 3l6 6M9 3l-6 6", "2"],
        ].map(([name, d, w]) => (
          <button key={name} aria-label={name} className="flex h-[17px] w-8 items-center justify-center border border-[#dcdcdc]">
            <svg width="13" height="12" viewBox="0 0 13 12" fill="none" stroke="#6d7987" strokeWidth={w}><path d={d} /></svg>
          </button>
        ))}
      </div>
    </div>
  );
}

function MainToolbar() {
  return (
    <div className="flex h-[35px] items-center overflow-hidden border-b border-[#d4d4d4] pl-1 pt-[3px]">
      {topGroups.map((band, b) => (
        <div key={b} className="flex items-center self-stretch">
          {b > 0 && <span className="ml-[9px] mr-[3px] w-px self-stretch bg-[#b4b4b4]" />}
          <Handle />
          <span className={b > 0 ? "w-1" : "w-[3px]"} />
          {band.map((group, g) => (
            <div key={g} className="flex items-center self-stretch">
              {g > 0 && <Rule />}
              {group.map((t) => (
                <ToolButton key={t.name} {...t} />
              ))}
            </div>
          ))}
        </div>
      ))}
      <button aria-label="More tools" className="ml-auto mr-1 self-start leading-3 text-[#446]">»</button>
    </div>
  );
}

function TradeBar() {
  return (
    <div className="flex h-[79px] bg-[#efefef] pl-[2px] pt-[2px]">
      <div className="flex w-5 flex-col items-center justify-between bg-gradient-to-b from-[#bcd2ec] to-[#9bb5d6] pb-1 pt-[6px] text-[#687890]">
        <button aria-label="Close trade bar" className="text-[11px] font-bold leading-3 text-black">x</button>
        <span className="rotate-180 whitespace-nowrap leading-4 [writing-mode:vertical-rl]">Trade Bar</span>
      </div>
      <div className="ml-[3px] mr-1 flex flex-1 flex-col">
        <div role="tablist" className="flex h-[21px] items-end whitespace-nowrap">
          <button role="tab" aria-selected="true" className="relative top-px flex h-[22px] w-[129px] items-center bg-white pl-[11px]">
            <span className="mr-2 size-[9px] shrink-0 rounded-full bg-[#2fae74]" />
            Interactive Brokers
          </button>
          <button role="tab" className="flex h-[19px] w-[67px] items-center border-r border-t border-[#d8d8d8] bg-[#f4f4f4] pl-2 pt-[2px]">
            <span className="mr-2 size-2 shrink-0 rounded-full bg-[#e9735a]" />
            OANDA
          </button>
          <button role="tab" className="flex h-[19px] w-[82px] items-center border-r border-t border-[#d8d8d8] bg-[#f4f4f4] pl-[10px] pt-[2px]">
            <span className="mr-2 size-2 shrink-0 rounded-full bg-[#e9735a]" />
            Rithmic 01
          </button>
        </div>
        <form className="flex h-[53px] items-center border border-[#d8d8d8] bg-white pb-[2px] pl-[13px]">
          <div className="flex h-6 w-[117px] items-center border border-[#7a7a7a] pr-[3px]">
            <input aria-label="Symbol" defaultValue="ASML" className="w-full min-w-0 flex-1 pb-[2px] pl-[2px] outline-none" />
            <svg width="13" height="13" viewBox="0 0 13 13" fill="none" stroke="#3d6478" strokeWidth="1.500" aria-hidden="true">
              <circle cx="5" cy="5" r="4" />
              <path d="M8 8l5 5" strokeWidth="2" />
            </svg>
          </div>
          <Combo label="Order type" value="Market" className="ml-[7px] w-[72px] border-[#adadad] bg-[#e1e1e1]" />
          <div className="ml-[14px] flex h-6 w-[81px] items-center border border-[#7a7a7a] pr-[3px]">
            <input aria-label="Quantity" defaultValue="100" className="min-w-0 flex-1 pb-[2px] pl-[5px] outline-none" />
            <svg width="12" height="14" viewBox="0 0 12 14" fill="none" stroke="#666" aria-hidden="true" className="mr-[6px]">
              <path d="M.5.5h11v13H.5zM2 3.500h8" />
              <path d="M2 6.500h8M2 9h8M2 11.500h8" strokeDasharray="2 1" strokeWidth="1.500" />
            </svg>
            <div className="flex flex-col">
              <button type="button" aria-label="Increase" className="flex h-[9px] w-[15px] items-center justify-center border border-[#adadad] bg-[#f0f0f0]"><svg width="5" height="3"><path d="M0 3h5L2.500 0z" /></svg></button>
              <button type="button" aria-label="Decrease" className="flex h-[9px] w-[15px] items-center justify-center border border-[#adadad] bg-[#f0f0f0]"><svg width="5" height="3"><path d="M0 0h5L2.500 3z" /></svg></button>
            </div>
          </div>
          <button type="button" className="ml-[10px] flex h-[23px] w-[96px] items-center border border-[#a8a8a8] bg-[#c8d6a8] shadow-[0_0_0_1px_#eee]">
            <span className="flex-1 border-r border-black text-center">203,8250</span>
            <svg width="8" height="7"><path d="M2 0v7l4-3.500z" /></svg>
          </button>
          <Combo label="Account" value="U2140511" className="ml-[6px] w-[102px] border-[#adadad] bg-[#e1e1e1]" />
          <Combo label="Time in force" value="DAY" className="ml-[6px] w-[56px] border-[#adadad] bg-[#e1e1e1]" />
          <button type="button" className="ml-[18px] h-[35px] w-[65px] border-2 border-[#a9a9b4] bg-[#b0bedf] leading-[14px]">
            Buy Mkt
            <b className="block text-[13px]">100</b>
          </button>
          <button type="button" className="ml-[5px] h-[35px] w-[65px] border-2 border-[#b4a9a9] bg-[#e2a0a2] leading-[14px]">
            Sell Mkt
            <b className="block text-[13px]">100</b>
          </button>
        </form>
      </div>
    </div>
  );
}

/* ---------- data window ---------- */

const dataRows: [string, string?, string?][] = [
  ["Cursor:"],
  ["Date", "27-08-19", "text-white"],
  ["Time", "17:00", "text-white"],
  ["Price", "208,0572", "text-white"],
  ["ASML:"],
  ["O", "193,3600", "text-[#8c8c8c]"],
  ["H", "193,4200", "text-[#8c8c8c]"],
  ["L", "192,7400", "text-[#8c8c8c]"],
  ["C", "192,8200", "text-[#8c8c8c]"],
  ["Up Vol", "15.529", "text-[#8c8c8c]"],
  ["Dn Vol", "0", "text-[#8c8c8c]"],
  ["Total Vol", "15.529", "text-[#8c8c8c]"],
  ["BarNumber", "1.936", "text-[#8c8c8c]"],
  ["Bollinger Bands:"],
  ["UpperBand", "194,1265", "text-[#00ffff]"],
  ["LowerBand", "192,2675", "text-[#ff0000]"],
  ["MidLine", "193,1970", "text-[#8c8c8c]"],
  ["RSI:"],
  ["RSI", "47,39", "text-[#c0c0c0]"],
  ["OverBot", "70,00", "text-[#008000]"],
  ["OverSld", "30,00", "text-[#008000]"],
  ["MACD:"],
  ["MACD", "0,27", "text-[#ffff00]"],
  ["MACDAvg", "0,35", "text-[#00ffff]"],
  ["MACDDiff", "-0,07", "text-[#ff0000]"],
  ["ZeroLine", "0,00", "text-[#008000]"],
];

function DataWindow() {
  return (
    <aside className="flex w-[170px] shrink-0 flex-col border-r border-[#888] bg-[#efefef] pl-[2px] pr-[2px] pt-[2px]">
      <div className="flex h-[17px] items-center justify-between bg-gradient-to-r from-[#9bb5d6] to-[#b8d0ee] pl-1 pr-[5px]">
        <h2 className="text-[12px] text-[#66758a]">Data Window</h2>
        <button aria-label="Close data window" className="pb-px text-[11px] font-bold leading-3">x</button>
      </div>
      <div className="mb-px mt-[2px] flex-1 bg-black font-['Liberation_Sans',sans-serif] text-[11px] leading-[13px] text-white">
        <table className="w-full table-fixed border-collapse">
          <colgroup>
            <col className="w-[65px]" />
            <col />
          </colgroup>
          <tbody>
            {dataRows.map(([name, value, tone], i) =>
              value ? (
                <tr key={i} className="h-[14px] border-b border-[#444]">
                  <th scope="row" className="border-r border-[#444] p-0 pl-1 text-left font-normal">{name}</th>
                  <td className={clsx("p-0 pr-1 text-right", tone)}>{value}</td>
                </tr>
              ) : (
                <tr key={i} className="h-[14px] border-b border-[#404040] bg-[#404040]">
                  <th colSpan={2} scope="colgroup" className="p-0 pl-1 text-left font-normal">{name}</th>
                </tr>
              ),
            )}
          </tbody>
        </table>
      </div>
    </aside>
  );
}

/* ---------- chart ---------- */

function TimeGrid({ from, to }: { from: number; to: number }) {
  return (
    <g stroke="#505050">
      {TICKS.map(([x]) => (
        <path key={x} d={`M${x + 0.5} ${from}V${to}`} strokeDasharray="1 3" />
      ))}
      <path d={`M313.5 ${from}V${to}`} strokeDasharray="1 3" />
      {SESSIONS.map((x) => (
        <path key={x} d={`M${x + 0.5} ${from}V${to}`} stroke="#404040" strokeDasharray="9 3 3 3" />
      ))}
    </g>
  );
}

function Pane({ top, className, axis, children, overlay }: { top: number; className: string; axis: ReactNode; children: ReactNode; overlay: ReactNode }) {
  return (
    <div className={clsx("relative flex overflow-hidden bg-black", className)}>
      <svg className="h-full min-w-0 flex-1" shapeRendering="crispEdges" fill="none" role="img" aria-label="Chart pane">
        <g transform={`translate(${-LEFT} ${-top})`}>{children}</g>
      </svg>
      <svg className="h-full w-[66px] shrink-0 border-l border-[#ff0000]" shapeRendering="crispEdges" fontSize="11" aria-label="Scale">
        <g transform={`translate(-1855 ${-top})`}>{axis}</g>
      </svg>
      {overlay}
    </div>
  );
}

function Tag({ y, bg, text }: { y: number; bg: string; text: string }) {
  return (
    <g>
      <path d={`M1856 ${y}l6-6.500h57v13h-57z`} fill={bg} />
      <text x="1863" y={y + 4}>{text}</text>
    </g>
  );
}

const CloseBox = () => (
  <button aria-label="Remove study" className="flex size-[14px] shrink-0 items-center justify-center rounded-[2px] border border-white">
    <svg width="6" height="6" viewBox="0 0 6 6" stroke="#fff"><path d="M0 0l6 6M6 0L0 6" /></svg>
  </button>
);

const BoxCaret = ({ name, children, className }: { name: string; children?: ReactNode; className: string }) => (
  <button aria-label={name} className={clsx("flex h-[13px] shrink-0 items-center justify-center rounded-[2px] border border-white text-white", className)}>
    {children}
    <svg width="6" height="3"><path d="M0 0h6L3 3z" fill="#fff" /></svg>
  </button>
);

const quote: [string, string, string][] = [
  ["Trade", "w-[34px]", "text-[#8c8c8c]"],
  ["AEB", "w-[27px]", "text-[#8c8c8c]"],
  ["Interactive Brokers", "w-[97px]", "text-[#8c8c8c]"],
  ["Stocks", "w-[39px]", "text-[#8c8c8c]"],
  ["04-09-19", "w-[50px]", "text-white"],
  ["11:08:44.421", "w-[69px]", "text-white"],
  ["B=203,8000", "w-16", "text-white"],
  ["A=203,8500", "w-[65px]", "text-white"],
  ["O=203,4500", "w-[65px]", "text-[#00ff00]"],
  ["H=204,9500", "w-16", "text-white"],
  ["L=202,5000", "w-[63px]", "text-white"],
  ["C=203,8000", "w-16", "text-[#00ff00]"],
  ["Last=203,8000", "w-[78px]", "text-[#00ff00]"],
  ["+2,5500", "w-[51px]", "text-[#00ff00]"],
  ["+1,27%", "w-11", "text-[#00ff00]"],
  ["V=219.679", "w-[58px]", "text-white"],
];

function PricePane() {
  const prices = Array.from({ length: 18 }, (_, i) => 206 - i);
  return (
    <Pane
      top={163}
      className="min-h-[514px] flex-1"
      axis={
        <>
          {prices.map((p) => (
            <g key={p}>
              <path d={`M1855 ${priceY(p) + 0.5}h3M1855 ${priceY(p - 0.5) + 0.5}h1`} stroke="#ff0000" />
              <text x="1860" y={priceY(p) + 4} fill="#fff">{p},0000</text>
            </g>
          ))}
          <Tag y={229.5} bg="#00ffff" text="205,7470" />
          <Tag y={280.5} bg="#00ff00" text="203,8000" />
          <path d="M1887 288h32v12h-32z" fill="#00ff00" />
          <text x="1890" y="298">06:15</text>
          <Tag y={317.5} bg="#808080" text="202,4175" />
          <Tag y={406.5} bg="#ff0000" text="199,0880" />
          <path d="M1890 186l6-5 4 3 9-8" stroke="#4a6a9a" fill="none" shapeRendering="auto" />
          <path d="M1890 189l6-5v3h4v4h-4v3z" fill={GREEN} />
          <path d="M1911 189l-6-5v3h-4v4h4v3z" fill={RED} />
        </>
      }
      overlay={
        <div className="absolute left-[4px] top-[4px] whitespace-nowrap text-[#8c8c8c]">
          <div className="flex h-[14px] items-center pl-[7px]">
            <div className="mr-[6px] flex h-[13px] w-8 items-center rounded-[2px] border border-white bg-[#808080] text-white">
              <span className="flex-1 text-center">SA</span>
              <span className="flex h-full w-[10px] items-center justify-center border-l border-white"><svg width="6" height="3"><path d="M0 0h6L3 3z" fill="#fff" /></svg></span>
            </div>
            <button className="mr-[7px] flex h-[13px] w-5 items-center justify-center rounded-[2px] border border-white bg-[#808080] text-white">VP</button>
            <span className="w-[34px]">ASML</span>
            <BoxCaret name="Symbol" className="mr-[6px] w-[13px]" />
            <BoxCaret name="Instrument" className="mr-[6px] w-[14px]">I</BoxCaret>
            <span className="w-[121px]">EUR Stock ASML (AEB)</span>
            <span className="w-[57px]">15 Minutes</span>
            <BoxCaret name="Resolution" className="mr-[6px] w-[13px]" />
            <BoxCaret name="Range" className="mr-[6px] w-[19px]">R</BoxCaret>
            {quote.map(([text, w, tone]) => (
              <span key={text} className={clsx("shrink-0", w, tone)}>{text}</span>
            ))}
            <CloseBox />
            <span className="ml-[6px] w-[87px] text-white">Bollinger Bands</span>
            <span className="whitespace-pre text-white">(close,  close,  close,  20,  2,  -2,  0)</span>
          </div>
          <div className="mt-[2px] flex h-[14px] items-center">
            <span className="w-[51px] text-[#00ffff]">205,7470</span>
            <span className="w-[51px] text-[#ff0000]">199,0880</span>
            <span>202,4175</span>
          </div>
        </div>
      }
    >
      <TimeGrid from={163} to={677} />
      {prices.map((p) => (
        <path key={p} d={`M171 ${priceY(p) + 0.5}H1852`} stroke="#505050" strokeDasharray="1 3" />
      ))}
      {BARS.map((b, i) => {
        const x = FIRST_BAR + i * BAR_STEP;
        return (
          <g key={i}>
            <path d={`M${x + 0.5} ${b.high}V${b.low}`} stroke="#999" />
            {b.dir === "d" ? (
              <path d={`M${x - 1} ${b.top + 0.5}h4`} stroke="#999" />
            ) : (
              <rect x={x - 1} y={b.top} width="3" height={b.bottom - b.top || 1} fill={b.dir === "g" ? "#00ff00" : "#ff0000"} />
            )}
          </g>
        );
      })}
      <polyline points={MIDDLE} stroke="#808080" />
      <polyline points={LOWER} stroke="#ff0000" />
      <polyline points={UPPER} stroke="#00ffff" />
    </Pane>
  );
}

function RsiPane() {
  return (
    <Pane
      top={681}
      className="h-[109px]"
      axis={
        <>
          <path d="M1855 727.500h3M1855 754.500h3M1855 781.500h3" stroke="#ff0000" />
          <text x="1860" y="758" fill="#fff">50,00</text>
          <Tag y={727.5} bg="#008000" text="70,00" />
          <Tag y={740.5} bg="#c0c0c0" text="60,58" />
          <Tag y={781.5} bg="#008000" text="30,00" />
        </>
      }
      overlay={
        <div className="absolute left-[4px] top-[2px] flex h-[14px] items-center whitespace-pre text-white">
          <CloseBox />
          <span className="ml-[6px] w-[28px]">RSI</span>
          <span className="w-[161px]">(close,  14,  30,  70,  cyan,  red)</span>
          <span className="w-[33px] text-[#c0c0c0]">60,58</span>
          <span className="w-[33px] text-[#008000]">70,00</span>
          <span className="text-[#008000]">30,00</span>
        </div>
      }
    >
      <TimeGrid from={681} to={790} />
      <path d="M171 754.500H1852" stroke="#505050" strokeDasharray="1 3" />
      {RSI_GREY.map((p) => (
        <polyline key={p} points={p} stroke="#c0c0c0" />
      ))}
      {RSI_RED.map((p) => (
        <polyline key={p} points={p} stroke="#ff0000" />
      ))}
      <path d="M170 727.500H1552M170 781.500H1552" stroke="#008000" />
    </Pane>
  );
}

function MacdPane() {
  return (
    <Pane
      top={794}
      className="h-[124px]"
      axis={
        <>
          <path d="M1855 844.500h3M1855 895.500h3" stroke="#ff0000" />
          <text x="1860" y="848" fill="#fff">1,00</text>
          <Tag y={850.5} bg="#ffff00" text="0,89" />
          <Tag y={859.5} bg="#00ffff" text="0,71" />
          <Tag y={886.5} bg="#ff0000" text="0,18" />
          <Tag y={895.5} bg="#008000" text="0,00" />
        </>
      }
      overlay={
        <div className="absolute left-[4px] top-[2px] flex h-[14px] items-center whitespace-pre text-white">
          <CloseBox />
          <span className="ml-[6px] w-[42px]">MACD</span>
          <span className="w-[62px]">(12,  26,  9)</span>
          <span className="w-[27px] text-[#ffff00]">0,89</span>
          <span className="w-[27px] text-[#00ffff]">0,71</span>
          <span className="w-[27px] text-[#ff0000]">0,18</span>
          <span className="text-[#008000]">0,00</span>
        </div>
      }
    >
      <TimeGrid from={794} to={918} />
      <path d="M171 844.500H1852" stroke="#505050" strokeDasharray="1 3" />
      {MACD_DIFF.map((v, i) => v !== 0 && <path key={i} d={`M${FIRST_BAR + i * BAR_STEP + 0.5} 895.500v${-v}`} stroke="#ff0000" />)}
      <polyline points={MACD_LINE} stroke="#ffff00" />
      <polyline points={MACD_AVG} stroke="#00ffff" />
      <path d="M170 895.500H1552" stroke="#008000" />
    </Pane>
  );
}

const Splitter = () => <div className="h-1 shrink-0 border-b-2 border-t-2 border-b-[#888] border-t-white" />;

function Chart() {
  return (
    <div className="flex flex-1 flex-col font-['Liberation_Sans',sans-serif] text-[11px] leading-[14px]">
      <PricePane />
      <Splitter />
      <RsiPane />
      <Splitter />
      <MacdPane />
      <svg className="h-[17px] w-full bg-black" shapeRendering="crispEdges" fontSize="11" aria-label="Time scale">
        <g transform={`translate(${-LEFT} -918)`}>
          <path d="M170 918.500H1855" stroke="#ff0000" />
          {TICKS.map(([x, label]) => (
            <g key={x}>
              <path d={`M${x + 0.5} 919v2`} stroke="#ff0000" />
              <text x={x + 2} y="932" fill="#fff">{label}</text>
            </g>
          ))}
          {SESSIONS.map((x) => (
            <path key={x} d={`M${x + 0.5} 919v1`} stroke="#ff0000" />
          ))}
        </g>
      </svg>
    </div>
  );
}

function ScrollBar() {
  return (
    <div className="flex h-[17px] items-center bg-[#f0f0f0] px-[5px]">
      <button aria-label="Scroll left"><svg width="6" height="9" viewBox="0 0 6 9" fill="none" stroke="#444" strokeWidth="2"><path d="M5 .5l-4 4 4 4" /></svg></button>
      <div className="flex h-[15px] flex-1 justify-end pl-3 pr-[11px]">
        <div className="w-[11%] bg-[#cdcdcd]" />
      </div>
      <button aria-label="Scroll right"><svg width="6" height="9" viewBox="0 0 6 9" fill="none" stroke="#444" strokeWidth="2"><path d="M1 .5l4 4-4 4" /></svg></button>
    </div>
  );
}

function WorkspaceTabs() {
  const tabs = [
    { label: "Indices Demo Workspace", box: "w-[157px]", w: 157 },
    { label: "Stocks Demo Workspace", box: "-ml-[5px] w-[151px]", w: 151 },
    { label: "Joris Workspace", box: "-ml-[6px] w-[118px] font-bold", w: 118, active: true },
  ];
  return (
    <div className="flex h-[19px] border-t border-[#666] bg-[#e5e5e5]">
      <div className="flex w-[76px] items-center bg-[#f0f0f0]">
        {[
          ["First", "M1 0v9M8 0L3 4.500 8 9z"],
          ["Previous", "M7 0L2 4.500 7 9z"],
          ["Next", "M2 0l5 4.500L2 9z"],
          ["Last", "M1 0l5 4.500L1 9zM8 0v9"],
        ].map(([name, d]) => (
          <button key={name} aria-label={`${name} workspace`} className="flex w-[19px] shrink-0 justify-center">
            <svg width="9" height="9" viewBox="0 0 9 9" fill="#666" stroke="#666" strokeWidth=".5"><path d={d} /></svg>
          </button>
        ))}
      </div>
      <div role="tablist" className="flex">
        {tabs.map((t) => (
          <button key={t.label} role="tab" aria-selected={!!t.active} className={clsx("relative -mt-px h-[19px] pl-1 text-center leading-[18px]", t.box)}>
            <svg className="absolute inset-0 h-[19px] w-full" viewBox={`0 0 ${t.w} 19`} preserveAspectRatio="none" aria-hidden="true">
              <path d={`M0 .5L9 18h${t.w - 18}L${t.w} .5`} fill={t.active ? "#f4f4f4" : "#c4c4c4"} stroke={t.active ? "#666" : "#9a9a9a"} />
            </svg>
            <span className="relative whitespace-nowrap">{t.label}</span>
          </button>
        ))}
      </div>
    </div>
  );
}

/* ---------- bottom bars ---------- */

const BandEnd = () => <span className="mr-[3px] w-px self-stretch bg-[#b4b4b4]" />;

const TallRule = ({ className }: { className?: string }) => <span className={clsx("h-[34px] w-px shrink-0 bg-[#8a8a8a]", className)} />;

function PlayButton({ name, d, className }: { name: string; d: string; className: string }) {
  return (
    <button aria-label={name} className={clsx("flex h-6 shrink-0 items-center justify-center", className)}>
      <svg width="9" height="9" viewBox="0 0 9 9" fill="#777" stroke="#777" strokeWidth=".5"><path d={d} /></svg>
    </button>
  );
}

function DrawingToolbar() {
  return (
    <div className="flex h-[42px] items-center overflow-hidden border-b-2 border-[#d8d8d8] bg-white pl-1">
      <Handle />
      <span className="w-1" />
      {drawGroups.map((group, g) => (
        <div key={g} className="flex items-center">
          {g > 0 && <span className="flex w-2 justify-center"><span className="h-[26px] w-px bg-[#8a8a8a]" /></span>}
          {group.map((t) => (
            <ToolButton key={t.name} {...t} />
          ))}
        </div>
      ))}
      <span className="w-[9px]" />
      <BandEnd />
      <Handle />
      <Combo label="Symbol or interval" value="Type a symbol/interval" className="ml-1 w-[149px] border-[#7a7a7a] bg-white" />
      <button aria-label="Sessions" className="ml-[14px]">
        <svg width="16" height="16" viewBox="0 0 16 16" fill="none" stroke="#6f8fc0" strokeWidth="1.300">
          <circle cx="8" cy="8" r="7" strokeDasharray="4 1" />
          <path d="M4 8h4l4-3" stroke={NAVY} />
        </svg>
      </button>
      <button aria-label="Session options" className="ml-[13px]"><Caret /></button>
      <span className="w-[13px]" />
      <BandEnd />
      <Handle />
      <Combo label="Resolution" value="As is (15 Minutes)" className="ml-1 w-[130px] border-[#adadad] bg-[#e1e1e1]" />
      <TallRule className="ml-[2px]" />
      <div className="ml-[5px] flex h-[22px] w-[136px] shrink-0 items-center border border-[#777] pr-[6px]">
        <input aria-label="Playback date" className="min-w-0 flex-1 outline-none" />
        <svg width="12" height="13" viewBox="0 0 12 13" fill="#eee" stroke="#777" aria-hidden="true" className="mr-[2px]">
          <path d="M.5.5h11v9l-3 3h-8z" />
          <path d="M3 4h6M3 6.500h6M3 9h4" strokeDasharray="1 1" />
        </svg>
        <Caret color="#44608c" />
      </div>
      <button aria-label="Playback calendar" className="ml-[6px]">
        <svg width="18" height="16" viewBox="0 0 18 16" fill="none" stroke="#555">
          <path d="M1 1.500h14" strokeWidth="2" />
          <path d="M1.500 2v11.500h8M14.500 2v4" />
          <path d="M3 5.500h10M3 8.500h7M3 11h5" strokeDasharray="2 1" strokeWidth="1.500" />
          <circle cx="13" cy="11" r="4.500" fill="#888" stroke="none" />
          <path d="M11.500 9v4l3-2zM15.500 9v4" fill="#fff" stroke="#fff" strokeWidth=".7" />
        </svg>
      </button>
      <TallRule className="ml-[9px]" />
      <button className="ml-4 flex w-[50px] shrink-0 items-center justify-between">
        <svg width="11" height="16" viewBox="0 0 11 16" fill="none" aria-hidden="true">
          <path d="M2.500 1v14M0 4.500h2.500M2.500 12.500H4" stroke={GREEN} strokeWidth="1.400" />
          <path d="M4.500 4.500l3-3v2h3v2.500h-3v2z" stroke="#666" />
        </svg>
        Jump
      </button>
      <TallRule className="ml-[10px]" />
      <PlayButton name="Step back" d="M6 0L2 4.500 6 9zM7.500 0h1v9h-1z" className="ml-[14px] w-[18px]" />
      <button aria-label="Step back options" className="ml-[13px] w-[10px]"><Caret color="#777" /></button>
      <PlayButton name="Play" d="M2 0l5 4.500L2 9z" className="ml-[11px] w-[18px]" />
      <PlayButton name="Step forward" d="M.5 0h1v9h-1zM3 0l5 4.500L3 9z" className="ml-[18px] w-[18px]" />
      <button aria-label="Step forward options" className="ml-[10px] w-[10px]"><Caret color="#777" /></button>
      <PlayButton name="Go to end" d="M1 0l5 4.500L1 9zM7 0h1v9H7z" className="ml-[10px] w-[18px]" />
      <TallRule className="ml-[9px]" />
      <input
        type="range"
        aria-label="Playback speed"
        min="0"
        max="100"
        defaultValue="17"
        className="ml-[11px] h-[14px] w-[89px] shrink-0 appearance-none bg-transparent [&::-webkit-slider-runnable-track]:h-1 [&::-webkit-slider-runnable-track]:border [&::-webkit-slider-runnable-track]:border-[#d6d6d6] [&::-webkit-slider-runnable-track]:bg-[#e7eaea] [&::-webkit-slider-thumb]:-mt-[6px] [&::-webkit-slider-thumb]:h-[14px] [&::-webkit-slider-thumb]:w-[6px] [&::-webkit-slider-thumb]:appearance-none [&::-webkit-slider-thumb]:bg-[#0078d7]"
      />
      <TallRule className="ml-[7px]" />
      <button disabled className="ml-[13px] flex w-[92px] shrink-0 items-center gap-2 whitespace-nowrap text-[#a0a0a0]">
        <svg width="16" height="16" viewBox="0 0 16 16" fill="none" stroke="#666" aria-hidden="true" className="shrink-0">
          <path d="M0 1.500h11M3 5h11" strokeWidth="2" />
          <path d="M.5 1v8M3.500 5v8.500h4M11 1.500v2" />
          <circle cx="11.500" cy="11" r="4.500" fill="#888" stroke="none" />
          <path d="M10 8.500v5l4-2.500z" fill="#fff" stroke="none" />
        </svg>
        Global Mode
      </button>
      <TallRule className="ml-[10px]" />
    </div>
  );
}

function StatusBar() {
  return (
    <footer className="flex h-[27px] items-center bg-[#f0f0f0] pl-[2px]">
      <span>Ready</span>
      <div className="ml-auto flex h-6 items-center">
        <span className="h-full w-[84px] border-l border-[#d4d4d4]" />
        <span className="h-full w-[82px] border-l border-[#d4d4d4]" />
        <span className="flex h-full w-16 items-center border-l border-[#d4d4d4] pl-[5px]">11:08:44</span>
        <span className="flex h-full w-[27px] items-center justify-center border-x border-[#d4d4d4]">
          <span className="size-[15px] bg-[#3cb371]" />
        </span>
        <span className="w-[14px]" />
      </div>
    </footer>
  );
}

export default function App() {
  return (
    <div className="flex min-h-screen flex-col bg-white font-['Roboto',sans-serif] text-[12px] leading-4 text-black">
      <TitleBar />
      <MenuBar />
      <MainToolbar />
      <TradeBar />
      <main className="flex flex-1 border-t border-[#999]">
        <DataWindow />
        <section className="flex min-w-0 flex-1 flex-col">
          <Chart />
          <ScrollBar />
          <WorkspaceTabs />
        </section>
      </main>
      <DrawingToolbar />
      <StatusBar />
    </div>
  );
}
